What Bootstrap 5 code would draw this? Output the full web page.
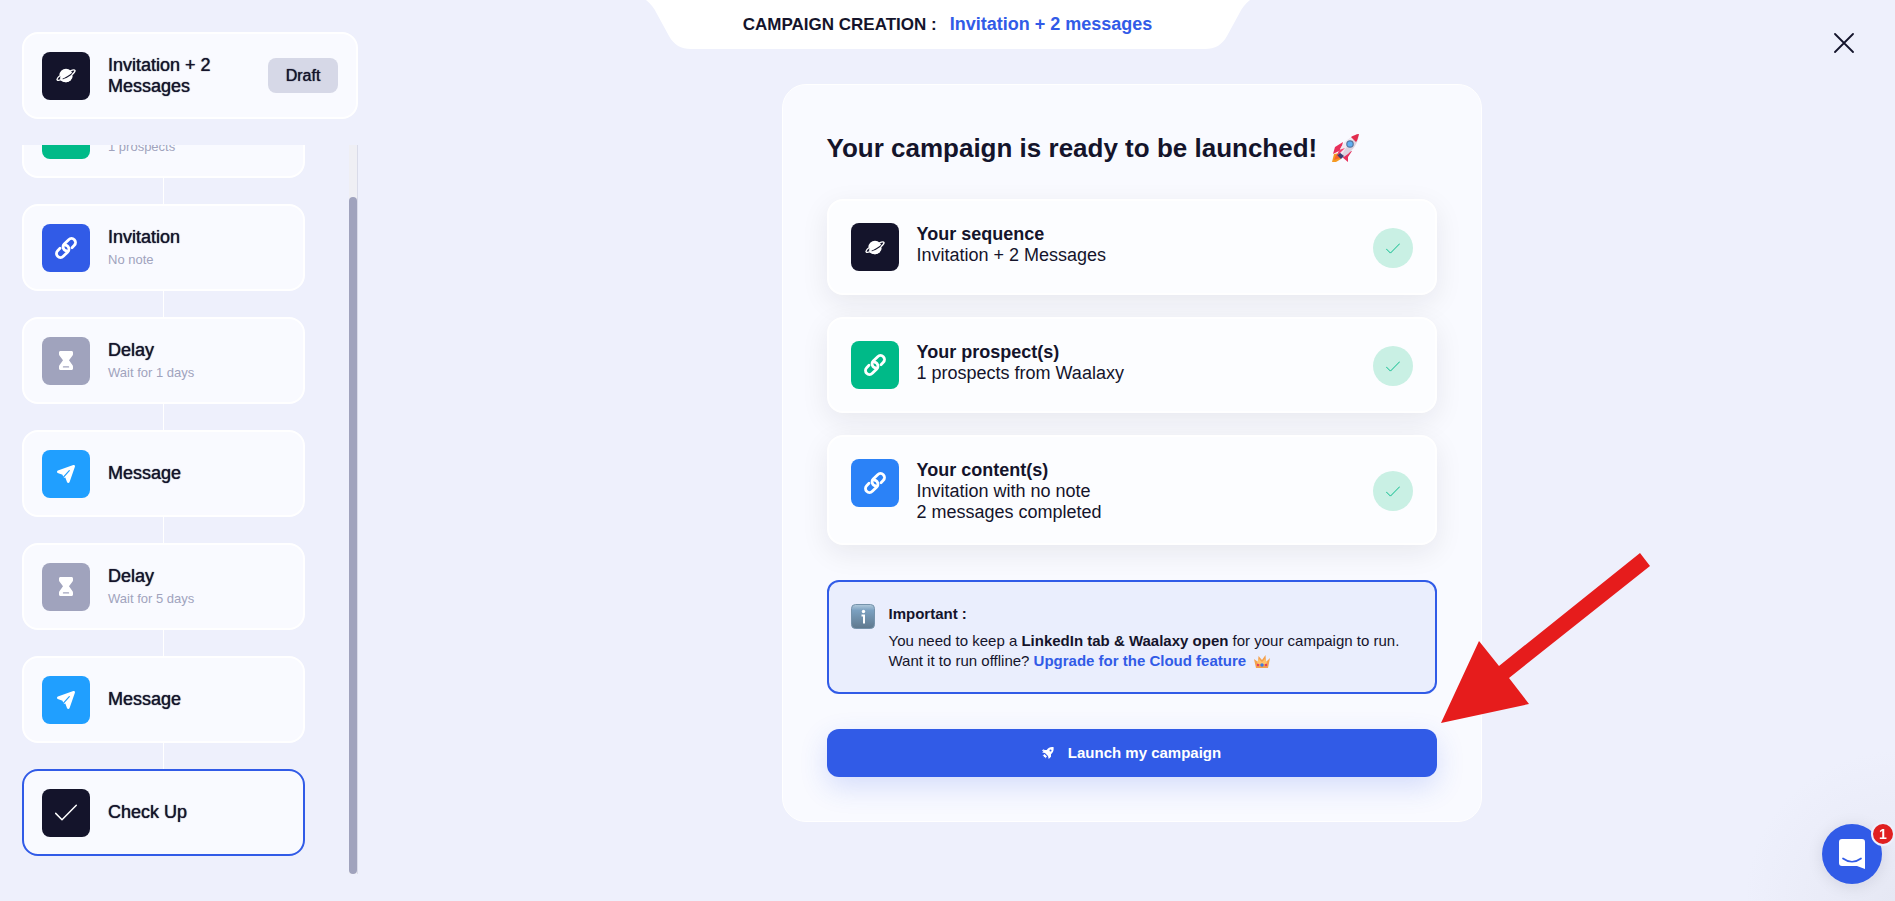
<!DOCTYPE html>
<html lang="en">
<head>
<meta charset="utf-8">
<meta name="viewport" content="width=device-width, initial-scale=1">
<title>Campaign creation</title>
<link href="https://cdn.jsdelivr.net/npm/bootstrap@5.3.0/dist/css/bootstrap.min.css" rel="stylesheet">
<style>
  :root { --ink:#14142b; --blue:#315be7; --muted:#a0a3bd; --surface:#f9faff; }
  body { background:#eef0fc; color:var(--ink); font-family:"Liberation Sans",Arial,sans-serif; font-size:18px; line-height:21px; }
  .glow { background:radial-gradient(circle at 100% 100%, #e6e8f4 0, #eef0fc 150px) no-repeat; }
  .medium { text-shadow:0 0 1px currentColor; }
  .sidebar { width:358px; height:100vh; padding:32px 0 27px 22px; }
  .panel { background:var(--surface); border:2px solid #fff; border-radius:16px; height:87px; padding:0 18px; gap:18px; }
  .step { width:283px; }
  .step-active { border-color:var(--blue); }
  .sub { color:var(--muted); font-size:13px; line-height:16px; margin-top:4px; }
  .tile { width:48px; height:48px; border-radius:8px; color:#fff; background:var(--ink); }
  .tile-green { background:#00ba88; } .tile-blue { background:var(--blue); }
  .tile-azure { background:#2b82f7; } .tile-sky { background:#209fff; } .tile-grey { background:var(--muted); }
  .draft { width:70px; height:35px; border-radius:8px; background:#d6d8e7; color:var(--ink); font-size:16px; padding:0; }
  .steps { border-right:1px solid #d9dbe9; margin-top:26px; }
  .step-list { padding-bottom:18px; }
  .link-line { width:1px; height:26px; background:#fff; margin:0 auto; }
  .track { width:8px; background:#efeff4; padding-top:52px; }
  .thumb { background:var(--muted); border-radius:4px; }
  .crumb { width:604px; height:48px; }
  .crumb-text { font-size:17px; gap:13px; height:48px; }
  .crumb-name { font-size:18px; }
  .blue { color:var(--blue); }
  .close-x { top:21px; right:30px; width:42px; height:42px; }
  .content { padding-left:10px; }
  .review { max-width:700px; margin-top:84px; padding:44px; background:var(--surface); border:1px solid #fff; border-radius:24px; }
  .review h1 { font-size:26px; line-height:38px; height:38px; margin:0 0 32px; gap:14px; }
  .item { background:#fcfdff; border:2px solid #fff; border-radius:16px; padding:22px 22px 20px; gap:18px; min-height:96px; margin-bottom:22px; box-shadow:0 8px 28px rgba(20,20,43,.08); }
  .item-text { padding-top:1px; }
  .tick { width:40px; height:40px; background:#c9f0e4; color:#00ba88; }
  .notice { background:#eaeefd; border:2px solid var(--blue); border-radius:12px; margin-top:35px; height:114px; padding:22px; gap:14px; font-size:15px; line-height:20px; }
  .notice-title { margin-bottom:7px; }
  .launch { background:var(--blue); color:#fff; height:48px; border-radius:12px; margin-top:35px; font-size:15px; font-weight:700; gap:14px; box-shadow:0 10px 28px rgba(49,91,231,.18); }
  .launch:hover { background:#254bcb; color:#fff; }
  .pointer { left:calc(100% - 40px); bottom:98px; pointer-events:none; }
  .chat { right:13px; bottom:17px; width:60px; height:60px; background:var(--blue); box-shadow:0 2px 16px rgba(20,20,43,.1); }
  .count { top:-2px; right:-13px; width:24px; height:24px; border:2px solid #eef0fc; background:#e02020; color:#fff; font-size:14px; font-weight:700; line-height:20px; }
</style>
</head>
<body class="glow min-vh-100">
<svg class="d-none" aria-hidden="true">
  <symbol id="i-planet" viewBox="0 0 22 18">
    <circle cx="11" cy="9" r="7.4" fill="currentColor"/>
    <path d="M4.2 9.6C1.6 11.700.4 13.400 1.200 14.400 2.500 16.100 8.300 14 13.500 10.800 18.700 7.600 22 4.200 20.900 2.700 20.300 1.900 18.600 2.100 16 3" fill="none" stroke="#14142b" stroke-width="3"/>
    <path d="M4.200 9.200C1.900 11 .8 12.900 1.300 13.700 1.900 14.700 4.600 14.200 7.500 12.800M15.400 4.100C18 2.900 20.300 2.400 20.800 3.300 21.200 4.200 19.800 6.300 17.500 8.200" fill="none" stroke="currentColor" stroke-width="1.500"/>
    <path d="M4.500 13.700c4 .1 9.800-3 13.700-6.500-.1 5-3.200 9.200-7.200 9.200-3 0-5.300-1-6.500-2.700z" fill="currentColor"/>
  </symbol>
  <symbol id="i-link" viewBox="0 0 22 22"><g transform="rotate(-45 11 11)" fill="none" stroke="currentColor" stroke-width="2.800" stroke-linecap="round"><path d="M15.500 15H18.800a4 4 0 0 0 0-8H12.500a4 4 0 0 0-3 6.600"/><path d="M6.500 7H3.200a4 4 0 0 0 0 8H9.500a4 4 0 0 0 3-6.600"/></g></symbol>
  <symbol id="i-glass" viewBox="0 0 14 19"><path fill="currentColor" fill-rule="evenodd" d="M1.500 0h11C13.400 0 14 .6 14 1.500v1.700c0 .6-.2 1.100-.6 1.600L10 9.200l3.400 4.900c.4.500.6 1 .6 1.600v1.800c0 .9-.6 1.500-1.500 1.500h-11C.6 19 0 18.400 0 17.500v-1.800c0-.6.2-1.100.6-1.600L4 9.200.6 4.800C.2 4.300 0 3.800 0 3.200V1.500C0 .6.6 0 1.500 0zM4.500 15.200a.7.7 0 0 0 0 1.400h5a.7.7 0 0 0 0-1.400z"/></symbol>
  <symbol id="i-plane" viewBox="0 0 18 18"><path fill="currentColor" d="M16.300.1.900 5.500C-.2 5.900-.3 7.400.7 7.900L5.500 9.800 6.600 13 8.300 12.600 10.100 17.200c.5 1.100 2 1 2.500-.1L17.900 1.700C18.200.7 17.300-.2 16.300.1z"/><path d="M12.300 5.700 6 12.700" stroke="#209fff" stroke-width="1.200" stroke-linecap="round"/></symbol>
  <symbol id="i-check" viewBox="0 0 22 17"><path d="M.7 9.400 7 15.700 21.300 1.200" fill="none" stroke="currentColor" stroke-width="1.500" stroke-linecap="round" stroke-linejoin="round"/></symbol>
</svg>

<div class="position-absolute top-0 start-50 translate-middle-x crumb">
  <svg class="position-absolute top-0 start-0" width="604" height="49" viewBox="0 0 604 49" aria-hidden="true"><path fill="#fff" d="M0 0C5 4 8 8 11 14L23 36C28 45 35 49 45 49H559C569 49 576 45 581 36L593 14C596 8 599 4 604 0z"/></svg>
  <div class="crumb-text position-relative d-flex justify-content-center align-items-center fw-bold"><span>CAMPAIGN CREATION :</span><span class="blue crumb-name">Invitation + 2 messages</span></div>
</div>
<button type="button" class="btn p-0 border-0 position-absolute close-x" aria-label="Close"><svg width="20" height="20" viewBox="0 0 20 20"><path d="M1 1 19 19M19 1 1 19" stroke="#14142b" stroke-width="1.800" stroke-linecap="round"/></svg></button>

<div class="d-flex">
  <aside class="sidebar d-flex flex-column flex-shrink-0">
    <header class="panel d-flex align-items-center flex-shrink-0">
      <span class="tile d-flex align-items-center justify-content-center flex-shrink-0"><svg width="20" height="17"><use href="#i-planet"/></svg></span>
      <span class="flex-grow-1 medium">Invitation + 2<br>Messages</span>
      <button type="button" class="btn draft border-0 medium">Draft</button>
    </header>
    <div class="steps d-flex justify-content-between flex-grow-1 overflow-hidden">
      <div class="step-list d-flex flex-column justify-content-end">
        <div class="panel step d-flex align-items-center flex-shrink-0"><span class="tile tile-green"></span><div><div>&nbsp;</div><div class="sub">1 prospects</div></div></div>
        <div class="link-line flex-shrink-0"></div>
        <div class="panel step d-flex align-items-center flex-shrink-0"><span class="tile tile-blue d-flex align-items-center justify-content-center"><svg width="22" height="22"><use href="#i-link"/></svg></span><div><div class="medium">Invitation</div><div class="sub">No note</div></div></div>
        <div class="link-line flex-shrink-0"></div>
        <div class="panel step d-flex align-items-center flex-shrink-0"><span class="tile tile-grey d-flex align-items-center justify-content-center"><svg width="14" height="19"><use href="#i-glass"/></svg></span><div><div class="medium">Delay</div><div class="sub">Wait for 1 days</div></div></div>
        <div class="link-line flex-shrink-0"></div>
        <div class="panel step d-flex align-items-center flex-shrink-0"><span class="tile tile-sky d-flex align-items-center justify-content-center"><svg width="18" height="18"><use href="#i-plane"/></svg></span><div class="medium">Message</div></div>
        <div class="link-line flex-shrink-0"></div>
        <div class="panel step d-flex align-items-center flex-shrink-0"><span class="tile tile-grey d-flex align-items-center justify-content-center"><svg width="14" height="19"><use href="#i-glass"/></svg></span><div><div class="medium">Delay</div><div class="sub">Wait for 5 days</div></div></div>
        <div class="link-line flex-shrink-0"></div>
        <div class="panel step d-flex align-items-center flex-shrink-0"><span class="tile tile-sky d-flex align-items-center justify-content-center"><svg width="18" height="18"><use href="#i-plane"/></svg></span><div class="medium">Message</div></div>
        <div class="link-line flex-shrink-0"></div>
        <div class="panel step step-active d-flex align-items-center flex-shrink-0"><span class="tile d-flex align-items-center justify-content-center"><svg width="22" height="17"><use href="#i-check"/></svg></span><div class="medium">Check Up</div></div>
      </div>
      <div class="track"><div class="thumb h-100"></div></div>
    </div>
  </aside>

  <main class="content flex-grow-1">
    <section class="review position-relative mx-auto">
      <h1 class="d-flex align-items-center fw-bold">Your campaign is ready to be launched!
        <svg width="30" height="30" viewBox="0 0 30 30" aria-hidden="true">
          <path d="M3 21 9 20 10 26 5 29 1 29z" fill="#f59a23"/><path d="M5 22 9 21 9 25 3 27z" fill="#f9652c"/>
          <path d="M12 9 4 14 2 21 10 17zM21 18 17 24 17 29 11 24 15 19z" fill="#e8305b"/>
          <path d="M8 22C8 13 16 5 28 1 27 12 20 20 11 25z" fill="#dcd3df"/><path d="M8 22C8 13 16 5 28 1 20 8 14 15 10 24z" fill="#f0e9f1"/>
          <path d="M28 1C27 5 26 8 25 9L20 4C22 3 25 1 28 1z" fill="#e22c4d"/><path d="M8 19 13 23 10 26 6 22z" fill="#3c3f73"/><path d="M14 15 6 23 8 17z" fill="#f3416d"/>
          <circle cx="19" cy="11" r="3.200" fill="#60aef2" stroke="#54779f" stroke-width="1.200"/>
        </svg>
      </h1>
      <div class="item d-flex align-items-start">
        <span class="tile d-flex align-items-center justify-content-center flex-shrink-0"><svg width="20" height="17"><use href="#i-planet"/></svg></span>
        <div class="item-text flex-grow-1"><b>Your sequence</b><br>Invitation + 2 Messages</div>
        <span class="tick rounded-circle d-flex align-items-center justify-content-center align-self-center"><svg width="14" height="11"><use href="#i-check"/></svg></span>
      </div>
      <div class="item d-flex align-items-start">
        <span class="tile tile-green d-flex align-items-center justify-content-center flex-shrink-0"><svg width="22" height="22"><use href="#i-link"/></svg></span>
        <div class="item-text flex-grow-1"><b>Your prospect(s)</b><br>1 prospects from Waalaxy</div>
        <span class="tick rounded-circle d-flex align-items-center justify-content-center align-self-center"><svg width="14" height="11"><use href="#i-check"/></svg></span>
      </div>
      <div class="item d-flex align-items-start">
        <span class="tile tile-azure d-flex align-items-center justify-content-center flex-shrink-0"><svg width="22" height="22"><use href="#i-link"/></svg></span>
        <div class="item-text flex-grow-1"><b>Your content(s)</b><br>Invitation with no note<br>2 messages completed</div>
        <span class="tick rounded-circle d-flex align-items-center justify-content-center align-self-center"><svg width="14" height="11"><use href="#i-check"/></svg></span>
      </div>
      <div class="notice d-flex align-items-start">
        <svg class="flex-shrink-0" width="24" height="25" viewBox="0 0 24 25" aria-hidden="true"><defs><linearGradient id="g" x2="0" y2="1"><stop stop-color="#b3cbdc"/><stop offset=".25" stop-color="#7ba0c0"/><stop offset="1" stop-color="#5f788d"/></linearGradient></defs><rect x=".5" y=".5" width="23" height="24" rx="4" fill="url(#g)" stroke="#7693ab"/><circle cx="12.500" cy="7.500" r="1.700" fill="#fff"/><path d="M10.500 11.500h2.500v8" fill="none" stroke="#fff" stroke-width="2"/></svg>
        <div>
          <div class="notice-title fw-bold">Important :</div>
          <div>You need to keep a <b>LinkedIn tab &amp; Waalaxy open</b> for your campaign to run.<br>Want it to run offline? <a href="#" class="blue fw-bold text-decoration-none">Upgrade for the Cloud feature</a>
          <svg class="ms-1" width="16" height="14" viewBox="0 0 16 14" aria-hidden="true"><path d="M2 13 0 4 4 7 4.500 1 8 5 11.500 0 12 7 16 3 14 13z" fill="#f4a04c"/><path d="M3 7 5 4 8 7 11 4 13 7 12 9H4z" fill="#ffc26b"/><circle cx="8" cy="10" r="1.700" fill="#3d7be0"/><circle cx="4" cy="10" r="1.200" fill="#e23f63"/><circle cx="12" cy="10" r="1.200" fill="#e23f63"/></svg></div>
        </div>
      </div>
      <button type="button" class="btn launch border-0 w-100 d-flex align-items-center justify-content-center">
        <svg width="12" height="12" viewBox="0 0 12 12" aria-hidden="true"><path fill="#fff" fill-rule="evenodd" d="M11.500 0C8.500-.2 6.300.8 4.700 3L2.300 3 .2 5.500 3 6 6 9 6.700 12 9 9.700V7.200C11.300 5.500 12 3.300 11.500 0zM8.500 2.400a1 1 0 1 1 0 2 1 1 0 0 1 0-2zM2.400 7 .5 9 2 8.800 1.700 10.300 3.200 10 3 11.500 5 9.500zM1 2.500h1.500L1.300 4H0z"/></svg>
        Launch my campaign
      </button>
      <svg class="pointer position-absolute" width="210" height="170" viewBox="0 0 210 170" aria-hidden="true"><path fill="#e61c1c" d="M0 170 38 88 58 113 199 0 209 13 68 125 88 151z"/></svg>
    </section>
  </main>
</div>

<button type="button" class="btn chat rounded-circle border-0 p-0 position-fixed d-flex align-items-center justify-content-center" aria-label="Open chat">
  <svg width="28" height="31" viewBox="0 0 28 31"><path fill="#fff" d="M4 0H24Q27 0 27 3V30L19 27H4Q1 27 1 24V3Q1 0 4 0z"/><path d="M5 19.500Q14 26 23 19.500" fill="none" stroke="#315be7" stroke-width="1.700" stroke-linecap="round"/></svg>
  <span class="count position-absolute rounded-circle">1</span>
</button>
<script src="https://cdn.jsdelivr.net/npm/bootstrap@5.3.0/dist/js/bootstrap.bundle.min.js"></script>
</body>
</html>
